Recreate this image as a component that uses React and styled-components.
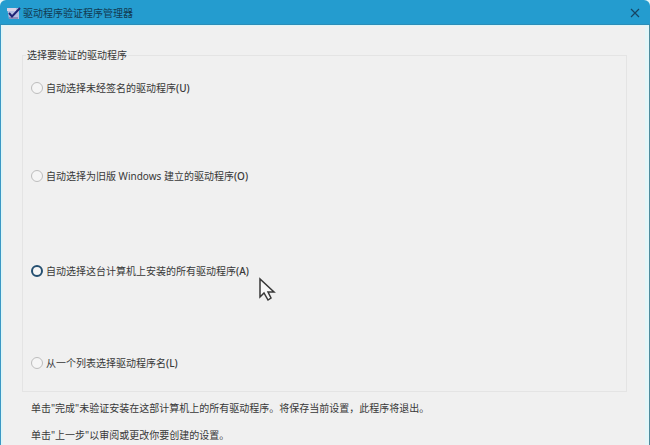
import { useState } from "react";
import styled, { createGlobalStyle } from "styled-components";

const GlobalStyle = createGlobalStyle`
  * {
    box-sizing: border-box;
  }
  body {
    margin: 0;
    background-color: #e4f6f8;
    color: #383838;
    font-family: "Noto Sans", "Noto Sans CJK SC", sans-serif;
    font-size: 10px;
    line-height: 16px;
  }
`;

const Window = styled.div`
  display: flex;
  flex-direction: column;
  min-height: 100vh;
  border-radius: 6px 6px 0 0;
  overflow: hidden;
  background-color: #f0f0f0;
`;

const TitleBar = styled.header`
  display: flex;
  align-items: center;
  height: 25px;
  padding: 2px 10px 0 6px;
  background-color: #249ccf;
  border-bottom: 1px solid #2c8db8;
`;

const Title = styled.h1`
  flex: 1;
  margin: 0 0 0 2px;
  font-size: 10px;
  font-weight: 400;
  color: #123a52;
`;

const CloseButton = styled.button`
  display: flex;
  align-items: center;
  justify-content: center;
  padding: 0;
  border: 0;
  background: none;
  color: #164463;
`;

const Body = styled.main`
  flex: 1;
  padding: 22px 18px 0 20px;
  border-left: 1px solid #3c97c4;
  border-right: 1px solid #4f8b9d;
  box-shadow: inset 2px 1px #dff5f7, inset -4px 0 #e4f6f8;
`;

const Group = styled.fieldset`
  display: grid;
  grid-template-rows: 88px 95px 92px 36px;
  align-items: start;
  min-width: 0;
  margin: 0 4px 0 1px;
  padding: 17px 8px 0;
  border: 1px solid #e4e4e4;
`;

const Legend = styled.legend`
  margin-left: -5px;
  padding: 0 1px;
`;

const Choice = styled.label`
  display: flex;
  align-items: center;
  justify-self: start;
  gap: 3px;
`;

const Radio = styled.input`
  appearance: none;
  width: 12px;
  height: 12px;
  margin: 0;
  border: 1px solid #bdbdbd;
  border-radius: 50%;
  background-color: #f5f5f5;
  &:checked {
    border: 2px solid #244f70;
  }
`;

const Key = styled.span`
  font-weight: 500;
`;

const Notes = styled.div`
  display: flex;
  flex-direction: column;
  gap: 11px;
  padding: 8px 10px 2px;
`;

const Note = styled.p`
  margin: 0;
`;

const Cursor = styled.svg`
  position: absolute;
  left: 258px;
  top: 277px;
  pointer-events: none;
`;

const choices = [
  { id: "unsigned", label: "自动选择未经签名的驱动程序", hotkey: "U" },
  { id: "old", label: "自动选择为旧版 Windows 建立的驱动程序", hotkey: "O" },
  { id: "all", label: "自动选择这台计算机上安装的所有驱动程序", hotkey: "A" },
  { id: "list", label: "从一个列表选择驱动程序名", hotkey: "L" },
];

function VerifierIcon() {
  return (
    <svg width="15" height="15" viewBox="0 0 15 15" aria-hidden="true">
      <path d="M1 2h12v11H3z" fill="#b4bce0" />
      <path d="M1 2h9v3H1z" fill="#d8d2e6" />
      <path d="M3 11h9v2H3z" fill="#8f8bb9" />
      <path
        d="M3 7 6 10.5 14 2"
        fill="none"
        stroke="#202275"
        strokeWidth="2"
      />
    </svg>
  );
}

function App() {
  const [selected, setSelected] = useState("all");

  return (
    <>
      <GlobalStyle />
      <Window>
        <TitleBar>
          <VerifierIcon />
          <Title>驱动程序验证程序管理器</Title>
          <CloseButton type="button" aria-label="关闭">
            <svg width="10" height="10" viewBox="0 0 10 10">
              <path d="M1 1 9 9M9 1 1 9" stroke="currentColor" strokeWidth="1.2" />
            </svg>
          </CloseButton>
        </TitleBar>
        <Body>
          <Group>
            <Legend>选择要验证的驱动程序</Legend>
            {choices.map((choice) => (
              <Choice key={choice.id}>
                <Radio
                  type="radio"
                  name="drivers"
                  checked={selected === choice.id}
                  onChange={() => setSelected(choice.id)}
                />
                <span>
                  {choice.label}
                  <Key>({choice.hotkey})</Key>
                </span>
              </Choice>
            ))}
          </Group>
          <Notes>
            <Note>
              单击"完成"未验证安装在这部计算机上的所有驱动程序。将保存当前设置，此程序将退出。
            </Note>
            <Note>单击"上一步"以审阅或更改你要创建的设置。</Note>
          </Notes>
        </Body>
      </Window>
      <Cursor width="18" height="25" viewBox="0 0 18 25" aria-hidden="true">
        <path
          d="M2 2v18l4-4 4 7 3-2-3-6h6z"
          fill="#f8f8f8"
          stroke="#383838"
          strokeWidth="1.5"
        />
      </Cursor>
    </>
  );
}

export default App;
